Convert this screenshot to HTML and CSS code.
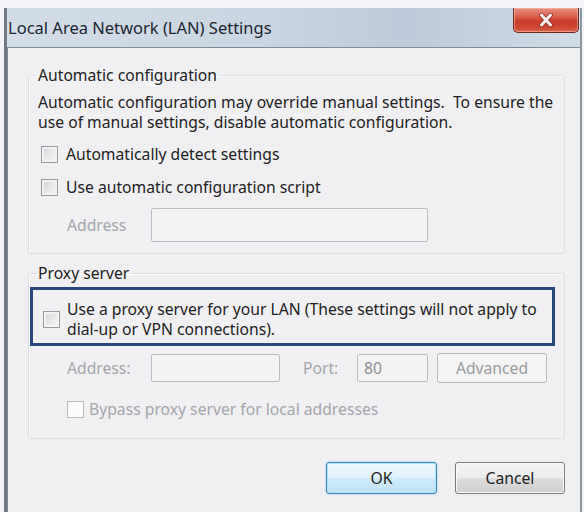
FILE: index.html
```html
<!doctype html>
<html>
<head>
    <title>Local Area Network (LAN) Settings</title>
    <link rel="stylesheet" href="styles.css">
</head>
<body>
<div class="window">
    <div class="titlebar">
        <span class="title">Local Area Network (LAN) Settings</span>
        <button type="button" class="close" aria-label="Close">
            <svg width="16" height="14" viewBox="0 0 16 14"><path d="M3.5 2 L12.5 12 M12.5 2 L3.5 12" stroke="#8a3026" stroke-width="4.5" stroke-linecap="round"/><path d="M3.5 2 L12.5 12 M12.5 2 L3.5 12" stroke="#f6eeec" stroke-width="3" stroke-linecap="round"/></svg>
        </button>
    </div>
    <div class="client">
        <!-- Automatic configuration -->
        <fieldset class="group group-auto">
            <legend>Automatic configuration</legend>
            <p class="note">Automatic configuration may override manual settings.&nbsp; To ensure the<br>use of manual settings, disable automatic configuration.</p>
            <label class="check first"><span class="box"></span>Automatically detect settings</label>
            <label class="check second"><span class="box"></span>Use automatic configuration script</label>
            <div class="field-row script-row">
                <span class="label disabled">Address</span>
                <span class="input wide"></span>
            </div>
        </fieldset>

        <!-- Proxy server -->
        <fieldset class="group group-proxy">
            <legend>Proxy server</legend>
            <label class="check focus"><span class="box"></span><span>Use a proxy server for your LAN (These settings will not apply to<br>dial-up or VPN connections).</span></label>
            <div class="field-row proxy-row">
                <span class="label disabled">Address:</span>
                <span class="input short"></span>
                <span class="label disabled port-label">Port:</span>
                <span class="input port">80</span>
                <button type="button" class="btn advanced" disabled>Advanced</button>
            </div>
            <label class="check bypass disabled"><span class="box"></span>Bypass proxy server for local addresses</label>
        </fieldset>

        <div class="buttons">
            <button type="button" class="btn ok">OK</button>
            <button type="button" class="btn">Cancel</button>
        </div>
    </div>
</div>
</body>
</html>
```

FILE: styles.css
```css
body {
    margin: 0;
    padding: 0;
    font-family: "Noto Sans", "Open Sans", sans-serif;
    font-size: 15.7px;
    color: #222222;
    background-color: #f3f5f8;
    overflow: hidden;
}
.window {
    margin: 8px 0 0 4px;
    width: 578px;
    height: 520px;
    box-sizing: border-box;
    border-left: 3px solid #6f7a85;
    border-right: 2px solid #8d98a3;
    background: linear-gradient(90deg, #d3dde8 0%, #c9d5e2 45%, #bccadb 70%, #c8d4e1 88%, #d2dce7 100%);
}
.titlebar {
    height: 39px;
    display: flex;
    align-items: flex-start;
    justify-content: space-between;
}
.title {
    margin: 8px 0 0 1px;
    font-size: 16.5px;
    color: #1c2530;
}
.close {
    width: 66px;
    height: 25px;
    margin: 0 1px 0 0;
    padding: 0;
    border: 1px solid #6a2a22;
    border-top: none;
    border-radius: 0 0 5px 5px;
    background: linear-gradient(180deg, #e58f7e 0%, #d9604b 35%, #c9392a 55%, #d04a36 85%, #dc6a52 100%);
    box-shadow: inset 0 0 0 1px rgba(255, 210, 200, 0.45);
    display: flex;
    align-items: center;
    justify-content: center;
}
.client {
    height: 480px;
    border-top: 1px solid #7f8a96;
    border-left: 1px solid #7f8a96;
    background-color: #f0f0f2;
    padding: 0 14px 0 20px;
}

/* group boxes */
.group {
    width: 537px;
    box-sizing: border-box;
    margin: 0;
    padding: 0 8px 0 9px;
    border: 1px solid #dcdee2;
    border-radius: 2px;
    box-shadow: 1px 1px 0 #fafafb inset;
}
.group legend {
    padding: 0 2px;
    margin-left: -2px;
    line-height: 20px;
    color: #222222;
}
.group-auto {
    margin-top: 17px;
    padding-bottom: 11px;
}
.group-proxy {
    margin-top: 9px;
    padding-bottom: 19px;
}
.note {
    margin: 7px 0 0;
    line-height: 20px;
}

/* checkboxes */
.check {
    display: flex;
    align-items: center;
    gap: 8px;
    line-height: 20px;
    margin-left: 3px;
}
.check .box {
    width: 15px;
    height: 15px;
    flex: none;
    border: 1px solid #979a9e;
    background: linear-gradient(135deg, #d2d4d7 0%, #eaeaec 60%, #f8f8f9 100%);
    box-shadow: inset 0 0 0 2px #f2f2f3;
}
.check.first {
    margin-top: 12px;
}
.check.second {
    margin-top: 13px;
}
.check.focus {
    margin: 4px 0 0 -8px;
    width: 525px;
    box-sizing: border-box;
    padding: 9px 6px 4px 10px;
    border: 3px solid #27487a;
    gap: 7px;
}
.check.bypass {
    margin: 16px 0 0 29px;
    gap: 5px;
}
.check.disabled {
    color: #a4a6aa;
}
.check.disabled .box {
    border-color: #b9bbbf;
    background: #fbfbfc;
    box-shadow: none;
}

/* address rows */
.field-row {
    display: flex;
    align-items: center;
    margin-left: 29px;
}
.script-row {
    margin-top: 11px;
}
.proxy-row {
    margin-top: 7px;
    height: 30px;
}
.label {
    width: 84px;
    flex: none;
}
.disabled {
    color: #a4a6aa;
}
.port-label {
    width: 54px;
    margin-left: 23px;
}
.input {
    display: block;
    box-sizing: border-box;
    border: 1px solid #b9bdc3;
    border-radius: 2px;
    background-color: #f3f3f4;
    color: #8c8e92;
    padding: 0 6px;
    line-height: 26px;
}
.input.wide {
    width: 277px;
    height: 34px;
}
.input.short {
    width: 129px;
    height: 28px;
}
.input.port {
    width: 71px;
    height: 28px;
}

/* buttons */
.btn {
    font-family: "Noto Sans", "Open Sans", sans-serif;
    font-size: 15.7px;
    color: #222222;
    height: 32px;
    width: 110px;
    padding: 0;
    border: 1px solid #7a7a7a;
    border-radius: 3px;
    background: linear-gradient(180deg, #f4f4f4 0%, #ececec 48%, #dddddd 52%, #d0d0d0 100%);
    box-shadow: inset 0 0 0 1px #fafafa;
}
.btn.advanced {
    margin-left: 9px;
    height: 30px;
    color: #9a9c9f;
    border-color: #b7b9bc;
    background: #f4f4f5;
    box-shadow: none;
}
.btn.ok {
    width: 111px;
    border-color: #3a86b4;
    background: linear-gradient(180deg, #eef8fd 0%, #e1f2fc 48%, #cde9fa 52%, #c0e2f6 100%);
    box-shadow: inset 0 0 0 1px #b6e3f8, 0 0 2px #7cc6ea;
}
.buttons {
    display: flex;
    justify-content: flex-end;
    gap: 18px;
    margin: 23px 1px 0 0;
}
```
